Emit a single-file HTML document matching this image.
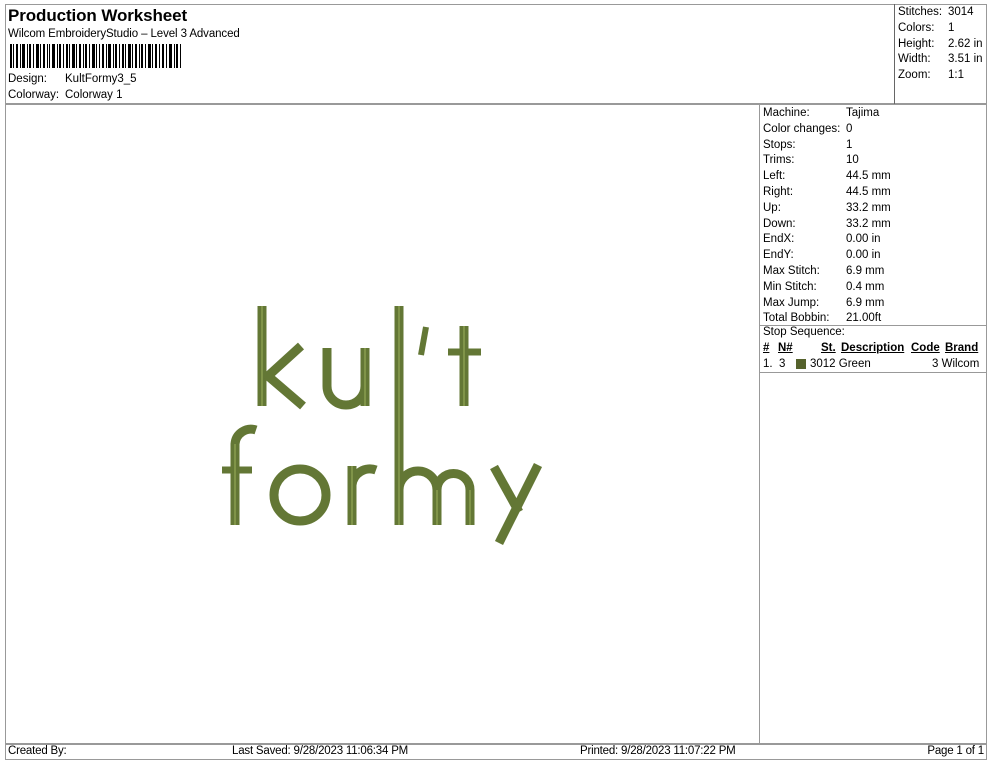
<!DOCTYPE html>
<html><head><meta charset="utf-8"><style>
body{margin:0;width:990px;height:762px;background:#fff;position:relative;font-family:"Liberation Sans",Arial,sans-serif;color:#000;overflow:hidden}
.a{position:absolute;white-space:nowrap}
.ln{position:absolute;background:#999}
.s{font-size:11.5px}
.nar{font-family:"Liberation Sans Narrow","Liberation Sans",sans-serif;font-size:11.5px;letter-spacing:-0.2px}
</style></head><body>
<div class="ln" style="left:5px;top:4px;width:981px;height:1px"></div>
<div class="ln" style="left:5px;top:4px;width:1px;height:756px"></div>
<div class="ln" style="left:986px;top:4px;width:1px;height:756px"></div>
<div class="ln" style="left:5px;top:103px;width:981px;height:2px"></div>
<div class="ln" style="left:894px;top:4px;width:1px;height:100px;background:#666"></div>
<div class="ln" style="left:759px;top:104px;width:1px;height:640px"></div>
<div class="ln" style="left:759px;top:325px;width:227px;height:1px"></div>
<div class="ln" style="left:759px;top:372px;width:227px;height:1px"></div>
<div class="ln" style="left:5px;top:743px;width:981px;height:2px"></div>
<div class="ln" style="left:5px;top:759px;width:981px;height:1px"></div>

<div class="a" style="left:8px;top:6px;font-size:17px;font-weight:bold;letter-spacing:-0.1px">Production Worksheet</div>
<div class="a s" style="left:8px;top:28px;letter-spacing:-0.1px">Wilcom EmbroideryStudio – Level 3 Advanced</div>
<svg class="a" style="left:10px;top:44px" width="175" height="24">
<g fill="#000">
<rect x="0" y="0" width="2" height="24"/><rect x="3" y="0" width="1" height="24"/><rect x="6" y="0" width="2" height="24"/><rect x="10" y="0" width="1" height="24"/><rect x="12" y="0" width="3" height="24"/><rect x="17" y="0" width="1" height="24"/><rect x="19" y="0" width="2" height="24"/><rect x="23" y="0" width="1" height="24"/><rect x="26" y="0" width="3" height="24"/><rect x="30" y="0" width="1" height="24"/><rect x="33" y="0" width="2" height="24"/><rect x="37" y="0" width="1" height="24"/><rect x="39" y="0" width="1" height="24"/><rect x="42" y="0" width="3" height="24"/><rect x="47" y="0" width="1" height="24"/><rect x="49" y="0" width="2" height="24"/><rect x="53" y="0" width="1" height="24"/><rect x="56" y="0" width="2" height="24"/><rect x="59" y="0" width="1" height="24"/><rect x="62" y="0" width="3" height="24"/><rect x="66" y="0" width="1" height="24"/><rect x="69" y="0" width="2" height="24"/><rect x="73" y="0" width="1" height="24"/><rect x="75" y="0" width="2" height="24"/><rect x="79" y="0" width="1" height="24"/><rect x="82" y="0" width="3" height="24"/><rect x="86" y="0" width="1" height="24"/><rect x="89" y="0" width="1" height="24"/><rect x="92" y="0" width="2" height="24"/><rect x="96" y="0" width="1" height="24"/><rect x="98" y="0" width="3" height="24"/><rect x="103" y="0" width="1" height="24"/><rect x="105" y="0" width="2" height="24"/><rect x="109" y="0" width="1" height="24"/><rect x="112" y="0" width="2" height="24"/><rect x="115" y="0" width="1" height="24"/><rect x="118" y="0" width="3" height="24"/><rect x="122" y="0" width="1" height="24"/><rect x="125" y="0" width="2" height="24"/><rect x="129" y="0" width="1" height="24"/><rect x="131" y="0" width="2" height="24"/><rect x="135" y="0" width="1" height="24"/><rect x="138" y="0" width="3" height="24"/><rect x="142" y="0" width="1" height="24"/><rect x="145" y="0" width="2" height="24"/><rect x="149" y="0" width="1" height="24"/><rect x="152" y="0" width="2" height="24"/><rect x="156" y="0" width="1" height="24"/><rect x="159" y="0" width="3" height="24"/><rect x="164" y="0" width="1" height="24"/><rect x="166" y="0" width="2" height="24"/><rect x="170" y="0" width="1" height="24"/>
</g></svg>
<div class="a s" style="left:8px;top:73px">Design:</div><div class="a s" style="left:65px;top:73px">KultFormy3_5</div>
<div class="a s" style="left:8px;top:89px">Colorway:</div><div class="a s" style="left:65px;top:89px">Colorway 1</div>

<div class="a s" style="left:898px;top:5px;line-height:15.8px">Stitches:<br>Colors:<br>Height:<br>Width:<br>Zoom:</div>
<div class="a s" style="left:948px;top:5px;line-height:15.8px">3014<br>1<br>2.62 in<br>3.51 in<br>1:1</div>

<div class="a s" style="left:763px;top:106px;line-height:15.8px">Machine:<br>Color changes:<br>Stops:<br>Trims:<br>Left:<br>Right:<br>Up:<br>Down:<br>EndX:<br>EndY:<br>Max Stitch:<br>Min Stitch:<br>Max Jump:<br>Total Bobbin:</div>
<div class="a s" style="left:846px;top:106px;line-height:15.8px">Tajima<br>0<br>1<br>10<br>44.5 mm<br>44.5 mm<br>33.2 mm<br>33.2 mm<br>0.00 in<br>0.00 in<br>6.9 mm<br>0.4 mm<br>6.9 mm<br>21.00ft</div>
<div class="a s" style="left:763px;top:326px">Stop Sequence:</div>
<div class="a s" style="left:763px;top:342px;font-weight:bold;text-decoration:underline">#</div>
<div class="a s" style="left:778px;top:342px;font-weight:bold;text-decoration:underline">N#</div>
<div class="a s" style="left:821px;top:342px;font-weight:bold;text-decoration:underline">St.</div>
<div class="a s" style="left:841px;top:342px;font-weight:bold;text-decoration:underline">Description</div>
<div class="a s" style="left:911px;top:342px;font-weight:bold;text-decoration:underline">Code</div>
<div class="a s" style="left:945px;top:342px;font-weight:bold;text-decoration:underline">Brand</div>
<div class="a s" style="left:763px;top:358px">1.&nbsp; 3</div>
<div class="a" style="left:796px;top:359px;width:10px;height:10px;background:#55622c"></div>
<div class="a s" style="left:810px;top:358px">3012 Green</div>
<div class="a s" style="left:932px;top:358px">3 Wilcom</div>

<svg class="a" style="left:0;top:0" width="760" height="740">
<g fill="none" stroke="#637735" stroke-width="9" stroke-linecap="butt">
<path d="M262 306V406"/>
<path d="M301 346L268 376L303 406"/>
<path d="M327 348V386A19 19 0 0 0 365 386"/>
<path d="M365 348V406"/>
<path d="M399 306V525"/>
<path d="M426 327L421 355" stroke-width="6"/>
<path d="M464 326V406"/>
<path d="M448 352H481" stroke-width="7"/>
<path d="M235 525V444A16 16 0 0 1 256 430"/>
<path d="M222 470H252" stroke-width="7"/>
<circle cx="300" cy="495" r="26"/>
<path d="M352 466V525"/>
<path d="M352 485A18 18 0 0 1 376 470"/>
<path d="M399 490A19 19 0 0 1 437 490V525"/>
<path d="M437 490A16 16 0 0 1 470 490V525"/>
<path d="M494 467L519 512"/>
<path d="M538 465L499 543"/>
</g>
<g fill="none" stroke="#9aae5c" stroke-width="1.5" opacity="0.7">
<path d="M262 306V406M399 306V525M464 326V406M365 348V406M235 525V444M352 466V525M437 490V525M470 490V525"/>
</g>
</svg>

<div class="a nar" style="left:8px;top:745px">Created By:</div>
<div class="a nar" style="left:232px;top:745px">Last Saved: 9/28/2023 11:06:34 PM</div>
<div class="a nar" style="left:580px;top:745px">Printed: 9/28/2023 11:07:22 PM</div>
<div class="a nar" style="right:6px;top:745px">Page 1 of 1</div>
</body></html>
